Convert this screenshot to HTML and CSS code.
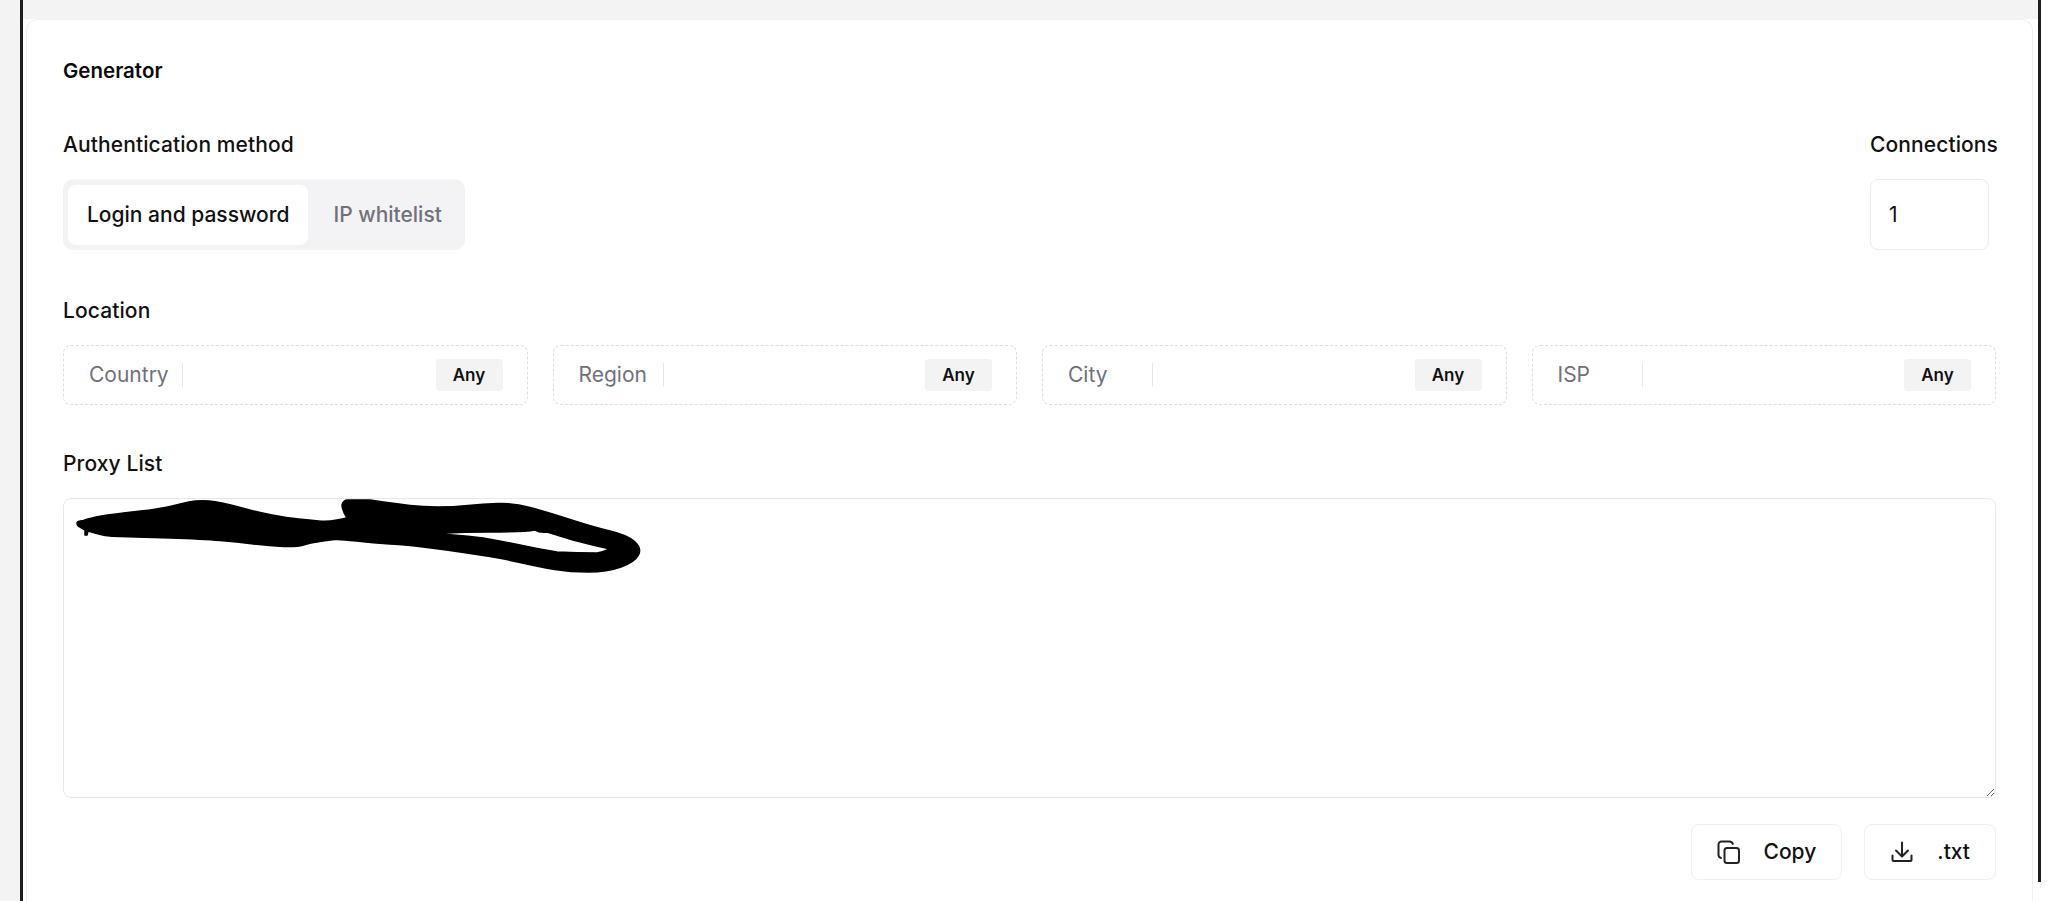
FILE: index.html
```html
<!DOCTYPE html>
<html lang="en">
<head>
<meta charset="utf-8">
<title>Generator</title>
<link rel="stylesheet" href="styles.css">
</head>
<body>
<div class="gutter"></div>
<div class="rule"></div>
<div class="main">
  <div class="topband"></div>
  <section class="card">
    <h2 class="title">Generator</h2>

    <div class="auth-row">
      <div class="group">
        <div class="label label-auth">Authentication method</div>
        <div class="segment">
          <button class="tab tab-active">Login and password</button>
          <button class="tab">IP whitelist</button>
        </div>
      </div>
      <div class="group conn">
        <div class="label label-auth">Connections</div>
        <input class="conn-input" value="1">
      </div>
    </div>

    <div class="label label-location">Location</div>
    <div class="fields">
      <div class="field"><span class="field-name">Country</span><span class="field-div"></span><span class="chip">Any</span></div>
      <div class="field"><span class="field-name">Region</span><span class="field-div"></span><span class="chip">Any</span></div>
      <div class="field"><span class="field-name">City</span><span class="field-div"></span><span class="chip">Any</span></div>
      <div class="field"><span class="field-name">ISP</span><span class="field-div"></span><span class="chip">Any</span></div>
    </div>

    <div class="label label-proxy">Proxy List</div>
    <div class="proxy-wrap">
      <textarea class="proxy" aria-label="Proxy List"></textarea>
      <svg class="scribble" viewBox="70 490 590 90" width="590" height="90" aria-hidden="true">
        <path fill="#000" stroke="#000" stroke-width="1.500" stroke-linejoin="round" fill-rule="evenodd" d="M83.5 520.500 Q90 518 101.500 516 Q113 514 136.500 511.500 Q160 509 170 506.500 Q180 504 189 502 Q198 500 209 501 Q220 502 238.500 507 Q257 512 272 515 Q287 518 298.500 519 Q310 520 318.500 521 Q327 522 337 520 L347 518 Q342 510 342 505 Q343 500 348 500 L370 500 Q370 500 383.500 502 Q397 504 410 505.500 Q423 507 438 507 Q453 507 468 505.500 Q483 504 498 503.500 Q513 503 530 507.500 Q547 512 570 519.500 Q593 527 610 531 Q627 535 634.500 541.500 Q642 548 638.500 555 Q635 562 621 567 Q607 572 588.500 572 Q570 572 555 569.500 Q540 567 520 562.500 Q500 558 490 556.500 Q480 555 463.500 552.500 Q447 550 427 547.500 Q407 545 390 544 Q373 543 356.500 541 Q340 539 335 539.500 Q330 540 320 541.500 Q310 543 303.500 545 Q297 547 283.500 546.500 Q270 546 253.500 544 Q237 542 220 540.500 Q203 539 170 538 Q137 537 120 536.500 Q103 536 95 533 L88 531 L87 535 L85 535 L85 530 L80 527 Q77 526 77 523 Q77 521 83.500 520.500 Z M440 534 Q453 532 488 532 Q523 532 535 530 Q540 533 547 532 Q560 536 573 540 Q592 545 610 549 Q603 552 597 553 Q577 553 557 552 Q538 549 520 545 Q500 541 483 538 Q468 536 453 535 Z"/>
      </svg>
    </div>

    <div class="actions">
      <button class="btn">
        <svg class="btn-icon" viewBox="0 0 24 24" width="24" height="24" fill="none" stroke="#222" stroke-width="2" stroke-linecap="round" stroke-linejoin="round" aria-hidden="true">
          <rect x="7.5" y="8" width="14.5" height="15" rx="2.5"/>
          <path d="M4 18 C2.4 17.5 1.5 16.3 1.5 15 V4.5 A3 3 0 0 1 4.5 1.5 H12.5 C14 1.5 15.3 2.4 15.8 4"/>
        </svg>
        <span>Copy</span>
      </button>
      <button class="btn">
        <svg class="btn-icon" viewBox="0 0 24 24" width="24" height="24" fill="none" stroke="#222" stroke-width="2" stroke-linecap="round" stroke-linejoin="round" aria-hidden="true">
          <path d="M12 2.5 V16 M6 10.5 L12 16.5 L18 10.5"/>
          <path d="M2.5 15.5 V20 A1 1 0 0 0 3.5 21 H20.5 A1 1 0 0 0 21.500 20 V15.500"/>
        </svg>
        <span>.txt</span>
      </button>
    </div>
  </section>
</div>
<div class="rule rule-short"></div>
</body>
</html>
```

FILE: styles.css
```css
* { box-sizing: border-box; }

html, body { height: 100%; }

body {
  margin: 0;
  display: flex;
  align-items: flex-start;
  height: 901px;
  overflow: hidden;
  background: #fff;
  font-family: Inter, "Liberation Sans", sans-serif;
  color: #111;
}

.gutter { flex: 0 0 20px; height: 901px; background: #f3f3f3; }
.rule { flex: 0 0 3px; height: 901px; background: #1d1d1d; }
.rule-short { height: 882px; }

.main { flex: 0 0 2015px; height: 901px; display: flex; flex-direction: column; }
.topband { flex: 0 0 19px; background: #f3f3f3; }

.card {
  flex: 1;
  margin: 0 5px 0 3px;
  padding: 39px 36px 0 36px;
  background: #fff;
  border: 1px solid #efefef;
  border-bottom: 0;
  border-radius: 12px 12px 0 0;
}

.title { margin: 0; font-size: 20.500px; line-height: 24px; font-weight: 600; color: #0a0a0a; }

.label { font-size: 21px; line-height: 24px; font-weight: 500; letter-spacing: .1px; color: #111; }
.label-auth { padding-top: 1px; height: 24px; }

.auth-row { display: flex; justify-content: space-between; margin-top: 49px; }
.conn { width: 126px; }

.segment {
  display: flex;
  gap: 6px;
  width: 402px;
  height: 71px;
  margin-top: 23px;
  padding: 6px 5px 5px;
  background: #f3f3f5;
  border-radius: 10px;
}

.tab {
  padding: 0 19px;
  border: 0;
  border-radius: 8px;
  background: transparent;
  font: 500 21px/24px Inter, "Liberation Sans", sans-serif;
  color: #71717a;
  white-space: nowrap;
}

.tab-active { background: #fff; color: #111; }

.conn-input {
  display: block;
  width: 119px;
  height: 71px;
  margin-top: 23px;
  padding: 0 18px;
  border: 1px solid #ececec;
  border-radius: 8px;
  background: #fff;
  font: 400 21px/24px Inter, "Liberation Sans", sans-serif;
  color: #111;
}

.label-location { margin-top: 48px; padding-top: 1px; height: 24px; }

.fields { display: grid; grid-template-columns: repeat(4, 1fr); gap: 25px; margin-top: 23px; }

.field {
  display: flex;
  align-items: center;
  height: 60px;
  padding: 0 24px 0 25px;
  border: 1px dashed #dedede;
  border-radius: 8px;
}

.field-name {
  min-width: 84px;
  padding-right: 13px;
  font-size: 21px;
  line-height: 24px;
  font-weight: 400;
  color: #71717a;
}

.field-div { width: 1px; height: 24px; background: #e6e6e6; }

.chip {
  margin-left: auto;
  width: 67px;
  height: 32px;
  border-radius: 4px;
  background: #f3f3f3;
  font-size: 17px;
  line-height: 32px;
  font-weight: 600;
  text-align: center;
  color: #111;
}

.label-proxy { margin-top: 46px; padding-top: 1px; height: 24px; }

.proxy-wrap { position: relative; margin-top: 23px; }

.proxy {
  display: block;
  width: 100%;
  height: 300px;
  border: 1px solid #e8e8e8;
  border-radius: 8px;
  background: #fff;
  outline: 0;
}

.scribble { position: absolute; left: 7px; top: -8px; }

.actions { display: flex; justify-content: flex-end; gap: 22px; margin-top: 26px; }

.btn {
  display: flex;
  align-items: center;
  gap: 23px;
  height: 56px;
  padding: 0 25px;
  border: 1px solid #f0f0f0;
  border-radius: 8px;
  background: #fff;
  font: 500 21px/24px Inter, "Liberation Sans", sans-serif;
  color: #111;
}

.btn-icon { flex: none; display: block; }
```
